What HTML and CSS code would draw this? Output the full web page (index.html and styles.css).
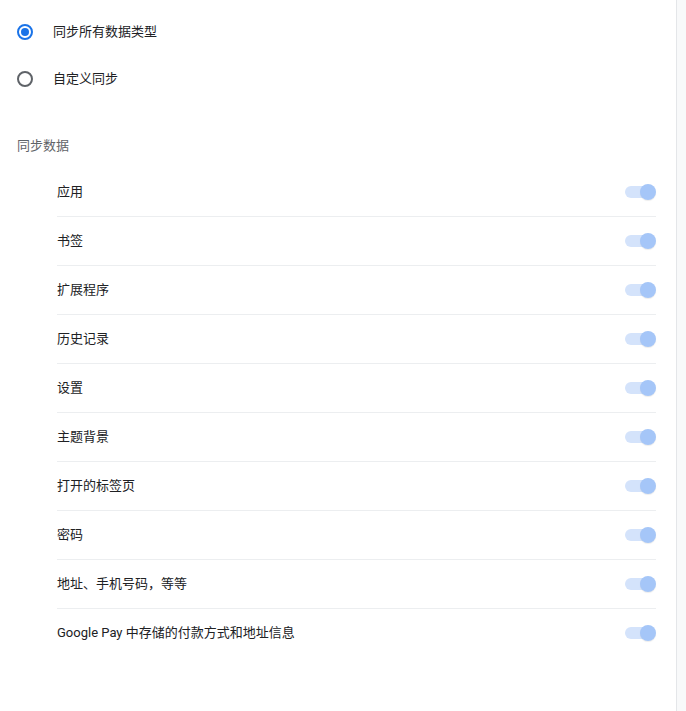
FILE: index.html
```html
<!DOCTYPE html>
<html lang="zh-CN">
<head>
<meta charset="utf-8">
<title>同步</title>
<link rel="stylesheet" href="styles.css">
</head>
<body>
<div class="card">
  <div class="radios">
    <div class="radio-row">
      <span class="radio checked"></span>
      <span class="label">同步所有数据类型</span>
    </div>
    <div class="radio-row">
      <span class="radio"></span>
      <span class="label">自定义同步</span>
    </div>
  </div>
  <div class="section-title">同步数据</div>
  <div class="list">
    <div class="item"><span>应用</span><span class="toggle"><span class="knob"></span></span></div>
    <div class="item"><span>书签</span><span class="toggle"><span class="knob"></span></span></div>
    <div class="item"><span>扩展程序</span><span class="toggle"><span class="knob"></span></span></div>
    <div class="item"><span>历史记录</span><span class="toggle"><span class="knob"></span></span></div>
    <div class="item"><span>设置</span><span class="toggle"><span class="knob"></span></span></div>
    <div class="item"><span>主题背景</span><span class="toggle"><span class="knob"></span></span></div>
    <div class="item"><span>打开的标签页</span><span class="toggle"><span class="knob"></span></span></div>
    <div class="item"><span>密码</span><span class="toggle"><span class="knob"></span></span></div>
    <div class="item"><span>地址、手机号码，等等</span><span class="toggle"><span class="knob"></span></span></div>
    <div class="item"><span>Google Pay 中存储的付款方式和地址信息</span><span class="toggle"><span class="knob"></span></span></div>
  </div>
</div>
</body>
</html>
```
FILE: styles.css
```css
html, body {
  margin: 0;
  padding: 0;
}
body {
  background: #f8f9fa;
  font-family: Roboto, "Noto Sans CJK SC", sans-serif;
  font-size: 13px;
  color: #202124;
}
.card {
  width: 677px;
  min-height: 711px;
  background: #fff;
  border-right: 1px solid #e4e6e9;
  box-sizing: border-box;
  padding-top: 8px;
}
.radios {
  padding-left: 17px;
}
.radio-row {
  height: 47px;
  display: flex;
  align-items: center;
  gap: 20px;
}
.radio {
  width: 16px;
  height: 16px;
  box-sizing: border-box;
  border: 2px solid #5f6368;
  border-radius: 50%;
  display: flex;
  align-items: center;
  justify-content: center;
}
.radio.checked {
  border-color: #1a73e8;
}
.radio.checked::after {
  content: "";
  width: 8px;
  height: 8px;
  border-radius: 50%;
  background: #1a73e8;
}
.label {
  line-height: 20px;
}
.section-title {
  margin-top: 34px;
  padding-left: 17px;
  line-height: 20px;
  padding-bottom: 12px;
  color: #5f6368;
}
.list {
  margin-left: 57px;
  margin-right: 20px;
}
.item {
  height: 44px;
  padding-bottom: 4px;
  display: flex;
  align-items: center;
  justify-content: space-between;
}
.item + .item {
  border-top: 1px solid #eceef0;
}
.toggle {
  position: relative;
  top: 2px;
  width: 30px;
  height: 12px;
  border-radius: 6px;
  background: #d4e3fb;
  margin-right: 1px;
}
.knob {
  position: absolute;
  right: -1px;
  top: -2px;
  width: 16px;
  height: 16px;
  border-radius: 50%;
  background: #a5c6f8;
  box-shadow: 0 1px 1px rgba(0,0,0,0.08);
}
```
